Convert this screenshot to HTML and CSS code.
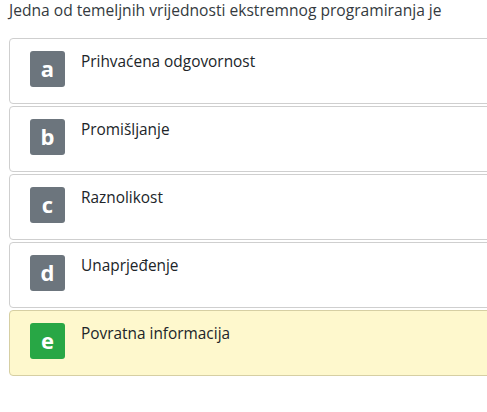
FILE: index.html
```html
<!DOCTYPE html>
<html lang="hr">
<head>
<meta charset="utf-8">
<link rel="stylesheet" href="styles.css">
</head>
<body>
<div class="question">
  <p class="prompt">Jedna od temeljnih vrijednosti ekstremnog programiranja je</p>
  <div class="answers">
    <div class="answer"><span class="badge">a</span><span class="label">Prihvaćena odgovornost</span></div>
    <div class="answer"><span class="badge">b</span><span class="label">Promišljanje</span></div>
    <div class="answer"><span class="badge">c</span><span class="label">Raznolikost</span></div>
    <div class="answer"><span class="badge">d</span><span class="label">Unaprjeđenje</span></div>
    <div class="answer correct"><span class="badge">e</span><span class="label">Povratna informacija</span></div>
  </div>
</div>
</body>
</html>
```

FILE: styles.css
```css
html, body {
  margin: 0;
  padding: 0;
  background: #fff;
  overflow: hidden;
}
body {
  font-family: "Open Sans", "Noto Sans", sans-serif;
  color: #212529;
}
.question {
  padding: 0 0 0 9px;
  width: 540px;
}
.prompt {
  margin: 0;
  font-size: 15.6px;
  line-height: 20px;
  color: #343a40;
}
.answers {
  margin-top: 18px;
  display: flex;
  flex-direction: column;
  gap: 2px;
}
.answer {
  display: flex;
  align-items: flex-start;
  gap: 16px;
  padding: 12px 20px 0 20px;
  box-sizing: border-box;
  height: 66px;
  border: 1px solid #cfcfcf;
  border-radius: 4px;
  background: #fff;
}
.answer.correct {
  background: #fef8cd;
  border-color: #d6cfa3;
}
.badge {
  flex: none;
  width: 35px;
  height: 36px;
  border-radius: 3px;
  background: #6c757d;
  color: #fff;
  font-weight: 700;
  font-size: 22px;
  display: flex;
  align-items: center;
  justify-content: center;
  line-height: 1;
  padding-bottom: 2px;
  box-sizing: border-box;
}
.correct .badge {
  background: #28a745;
}
.label {
  font-size: 15.4px;
  line-height: 22px;
  color: #212529;
}
```
